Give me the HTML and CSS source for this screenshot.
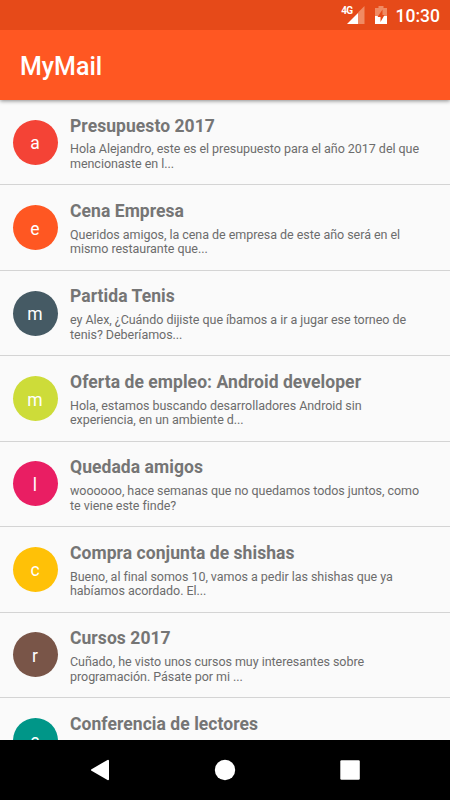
FILE: index.html
```html
<!DOCTYPE html>
<html lang="es">
<head>
<meta charset="utf-8">
<title>MyMail</title>
<link rel="stylesheet" href="styles.css">
</head>
<body>
<div class="screen">
  <div class="status">
    <span class="network">4G</span>
    <svg class="signal" width="18" height="18" viewBox="0 0 18 18"><path d="M17.5 0V18H11V6.5Z" fill="#f08a63"/><path d="M11 7V18H0Z" fill="#fff"/></svg>
    <svg class="battery" width="12" height="18" viewBox="0 0 12 18"><path d="M3.5 0H8.5V2H12V10H0V2H3.5Z" fill="#f08a63"/><path d="M0 10H12V18H0Z" fill="#fff"/><path d="M7.5 3.5L2.5 11H5.5V16L9.5 9H7.5Z" fill="#e64a19"/></svg>
    <span class="clock">10:30</span>
  </div>
  <header class="toolbar"><h1>MyMail</h1></header>
  <main class="list">
    <article class="mail"><div class="avatar red">a</div><div class="body"><h2>Presupuesto 2017</h2><p>Hola Alejandro, este es el presupuesto para el año 2017 del que<br>mencionaste en l...</p></div></article>
    <article class="mail"><div class="avatar orange">e</div><div class="body"><h2>Cena Empresa</h2><p>Queridos amigos, la cena de empresa de este año será en el<br>mismo restaurante que...</p></div></article>
    <article class="mail"><div class="avatar slate">m</div><div class="body"><h2>Partida Tenis</h2><p>ey Alex, ¿Cuándo dijiste que íbamos a ir a jugar ese torneo de<br>tenis? Deberíamos...</p></div></article>
    <article class="mail"><div class="avatar lime">m</div><div class="body"><h2>Oferta de empleo: Android developer</h2><p>Hola, estamos buscando desarrolladores Android sin<br>experiencia, en un ambiente d...</p></div></article>
    <article class="mail"><div class="avatar pink">l</div><div class="body"><h2>Quedada amigos</h2><p>woooooo, hace semanas que no quedamos todos juntos, como<br>te viene este finde?</p></div></article>
    <article class="mail"><div class="avatar amber">c</div><div class="body"><h2>Compra conjunta de shishas</h2><p>Bueno, al final somos 10, vamos a pedir las shishas que ya<br>habíamos acordado. El...</p></div></article>
    <article class="mail"><div class="avatar brown">r</div><div class="body"><h2>Cursos 2017</h2><p>Cuñado, he visto unos cursos muy interesantes sobre<br>programación. Pásate por mi ...</p></div></article>
    <article class="mail"><div class="avatar teal">e</div><div class="body"><h2>Conferencia de lectores</h2></div></article>
  </main>
  <nav class="navbar">
    <svg width="20" height="22" viewBox="0 0 20 22"><path d="M18 1.8V20.2L2 11Z" fill="#fff" stroke="#fff" stroke-width="2" stroke-linejoin="round"/></svg>
    <svg width="22" height="22" viewBox="0 0 22 22"><circle cx="11" cy="11" r="10.2" fill="#fff"/></svg>
    <svg width="20" height="20" viewBox="0 0 20 20"><rect x=".3" y=".2" width="19.5" height="19.6" rx="1.2" fill="#fff"/></svg>
  </nav>
</div>
</body>
</html>
```
FILE: styles.css
```css
* { box-sizing: border-box; }
body { margin: 0; font-family: Roboto, sans-serif; }
.screen { width: 450px; height: 800px; display: flex; flex-direction: column; overflow: hidden; background: #fafafa; }
.status { height: 30px; flex: none; display: flex; justify-content: flex-end; align-items: flex-start; padding: 6px 10px 0 0; background: #e64a19; color: #fff; z-index: 2; }
.network { font-size: 10px; line-height: 10px; font-weight: 700; letter-spacing: -.6px; margin-right: -6px; z-index: 1; }
.battery { margin: 0 9px 0 10px; }
.clock { font-size: 17.5px; line-height: 20px; font-weight: 500; }
.toolbar { height: 70px; flex: none; display: flex; align-items: center; padding: 2px 20px 0; background: #ff5722; color: #fff; box-shadow: 0 1px 4px rgba(0,0,0,.45); z-index: 1; }
h1 { margin: 0; font-size: 25px; font-weight: 500; }
.list { flex: 1; min-height: 0; overflow: hidden; }
.mail { height: 85.44px; display: flex; padding: 0 12.5px; gap: 12.5px; border-bottom: 1px solid #d4d4d4; }
.avatar { width: 45px; height: 45px; flex: none; margin-top: 19.7px; border-radius: 50%; display: flex; align-items: center; justify-content: center; color: #fff; font-size: 17.5px; line-height: 21px; padding-top: 3px; }
.body { color: #757575; padding-top: 13.5px; white-space: nowrap; }
h2 { margin: 0; font-size: 17.5px; line-height: 25px; font-weight: 700; letter-spacing: .06px; }
p { margin: 3.9px 0 0; font-size: 12.5px; line-height: 14.6px; letter-spacing: -.04px; color: #6c6c6c; }
.red { background: #f44336; }
.orange { background: #ff5722; }
.slate { background: #455a64; }
.lime { background: #cddc39; }
.pink { background: #e91e63; }
.amber { background: #ffc107; }
.brown { background: #795548; }
.teal { background: #009688; }
.navbar { height: 60px; flex: none; display: flex; align-items: center; justify-content: center; gap: 104px; background: #000; }
```
